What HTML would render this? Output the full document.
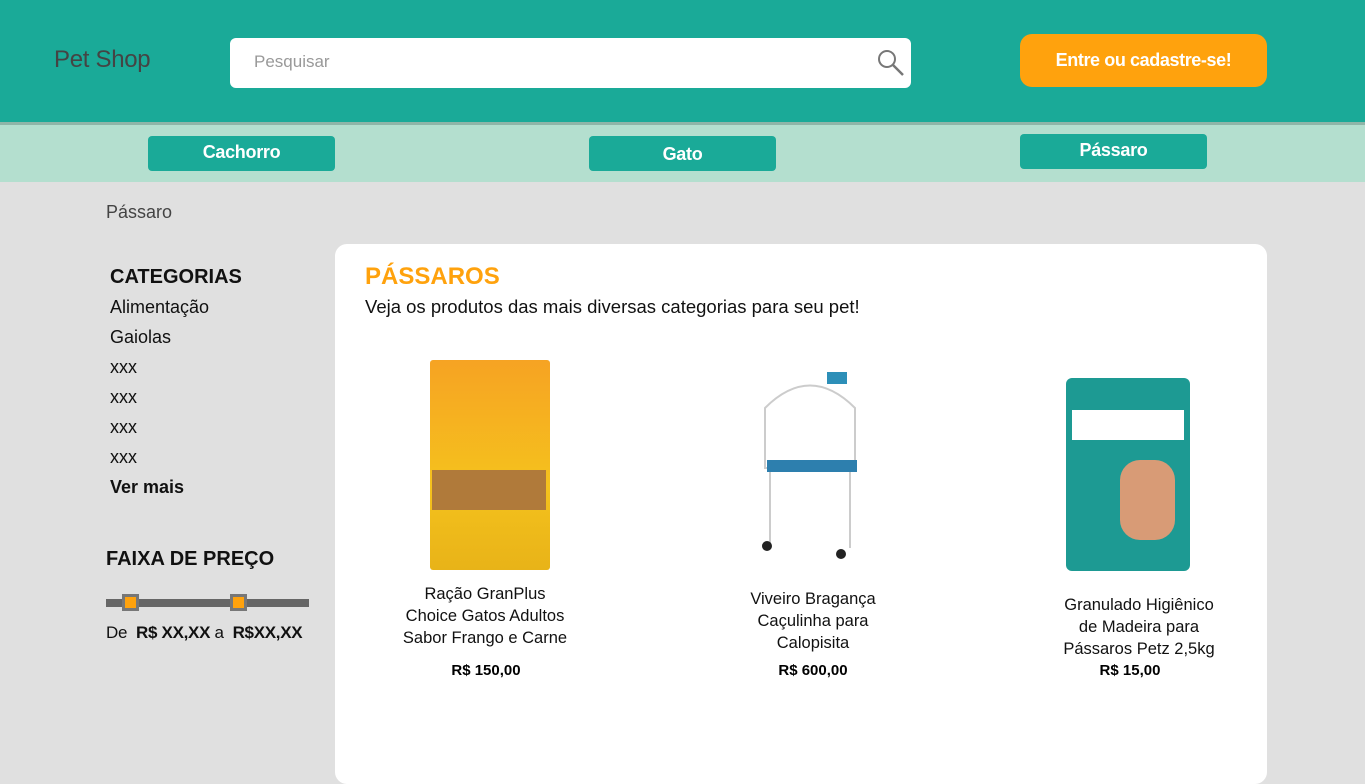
<!DOCTYPE html>
<html><head><meta charset="utf-8"><style>
*{margin:0;padding:0;box-sizing:border-box}
body{width:1365px;height:769px;overflow:hidden;background:#e0e0e0;font-family:"Liberation Sans",sans-serif;position:relative}
.a{position:absolute}
.hdr{left:0;top:0;width:1365px;height:122px;background:#1aaa98}
.nav{left:0;top:122px;width:1365px;height:60px;background:#b4dfcf;border-top:3px solid #8fb5a8}
.btn{background:#1aaa98;color:#fff;font-weight:bold;font-size:18px;text-align:center;border-radius:4px;height:35px;line-height:33px;width:187px;letter-spacing:-0.3px}
.card{left:335px;top:244px;width:932px;height:540px;background:#fff;border-radius:12px}
.side div{font-size:18px;color:#111;height:30px;line-height:26px}
.pn{font-size:16.5px;color:#111;text-align:center;line-height:22px;width:240px}
.pp{font-size:15px;font-weight:bold;text-align:center;width:240px}
</style></head><body>
<div class="a hdr"></div>
<div class="a" style="left:54px;top:46px;font-size:24px;color:#444;letter-spacing:-0.3px">Pet Shop</div>
<div class="a" style="left:230px;top:38px;width:681px;height:50px;background:#fff;border-radius:6px"></div>
<div class="a" style="left:254px;top:52px;font-size:17px;color:#999">Pesquisar</div>
<svg class="a" style="left:876px;top:48px" width="30" height="30"><circle cx="11" cy="11" r="8" fill="none" stroke="#777" stroke-width="2"/><line x1="17" y1="17" x2="27" y2="27" stroke="#777" stroke-width="2.5"/></svg>
<div class="a" style="left:1020px;top:34px;width:247px;height:53px;background:#ffa20d;border-radius:12px;color:#fff;font-weight:bold;font-size:18px;text-align:center;line-height:53px;letter-spacing:-0.4px">Entre ou cadastre-se!</div>
<div class="a nav"></div>
<div class="a btn" style="left:148px;top:136px">Cachorro</div>
<div class="a btn" style="left:589px;top:136px;line-height:37px">Gato</div>
<div class="a btn" style="left:1020px;top:134px">Pássaro</div>
<div class="a" style="left:106px;top:202px;font-size:18px;color:#444">Pássaro</div>
<div class="a side" style="left:110px;top:264px">
<div style="font-weight:bold;font-size:20px">CATEGORIAS</div><div>Alimentação</div><div>Gaiolas</div><div>xxx</div><div>xxx</div><div>xxx</div><div>xxx</div><div style="font-weight:bold">Ver mais</div></div>
<div class="a" style="left:106px;top:548px;font-size:20px;font-weight:bold;color:#111">FAIXA DE PREÇO</div>
<div class="a" style="left:106px;top:599px;width:203px;height:8px;background:#666"></div>
<div class="a" style="left:122px;top:594px;width:17px;height:17px;background:#ffa20d;border:3px solid #777"></div>
<div class="a" style="left:230px;top:594px;width:17px;height:17px;background:#ffa20d;border:3px solid #777"></div>
<div class="a" style="left:106px;top:623px;font-size:17px;color:#111;letter-spacing:-0.3px">De &nbsp;<b>R$ XX,XX</b> a &nbsp;<b>R$XX,XX</b></div>
<div class="a card"></div>
<div class="a" style="left:365px;top:263px;font-size:24px;font-weight:bold;color:#ffa20d">PÁSSAROS</div>
<div class="a" style="left:365px;top:296px;font-size:18.5px;color:#111">Veja os produtos das mais diversas categorias para seu pet!</div>
<div class="a" style="left:430px;top:360px;width:120px;height:210px;background:linear-gradient(#f6a323,#f5c21d 60%,#e8b318);border-radius:3px"></div>
<div class="a" style="left:432px;top:470px;width:114px;height:40px;background:#b07a3a"></div>
<svg class="a" style="left:755px;top:368px" width="115" height="195"><g fill="none" stroke="#ccc" stroke-width="2"><path d="M10 40 Q55 -5 100 40 V100 H10Z"/><line x1="15" y1="100" x2="15" y2="180"/><line x1="95" y1="100" x2="95" y2="180"/></g><rect x="12" y="92" width="90" height="12" fill="#2d7fae"/><circle cx="12" cy="178" r="5" fill="#222"/><circle cx="86" cy="186" r="5" fill="#222"/><rect x="72" y="4" width="20" height="12" fill="#2d8fb8"/></svg>
<div class="a" style="left:1066px;top:378px;width:124px;height:193px;background:#1d9a93;border-radius:6px"></div>
<div class="a" style="left:1072px;top:410px;width:112px;height:30px;background:#fff"></div>
<div class="a" style="left:1120px;top:460px;width:55px;height:80px;background:#d89b76;border-radius:20px"></div>
<div class="a pn" style="left:365px;top:583px">Ração GranPlus<br>Choice Gatos Adultos<br>Sabor Frango e Carne</div>
<div class="a pp" style="left:366px;top:662px">R$ 150,00</div>
<div class="a pn" style="left:693px;top:588px">Viveiro Bragança<br>Caçulinha para<br>Calopisita</div>
<div class="a pp" style="left:693px;top:662px">R$ 600,00</div>
<div class="a pn" style="left:1019px;top:594px">Granulado Higiênico<br>de Madeira para<br>Pássaros Petz 2,5kg</div>
<div class="a pp" style="left:1010px;top:662px">R$ 15,00</div>
</body></html>
